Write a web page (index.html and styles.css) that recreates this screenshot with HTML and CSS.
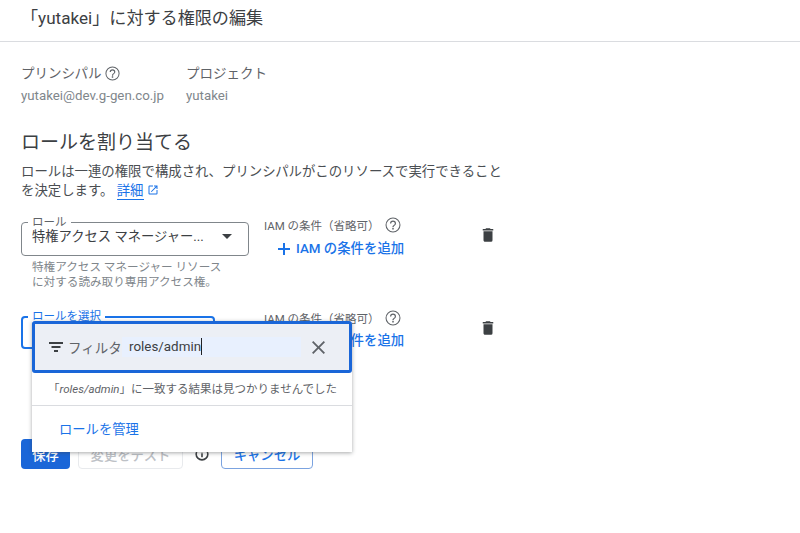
FILE: index.html
```html
<!DOCTYPE html>
<html lang="ja">
<head>
<meta charset="utf-8">
<title>権限の編集</title>
<link rel="stylesheet" href="styles.css">
</head>
<body>
<header class="top"><h1>「yutakei」に対する権限の編集</h1></header>
<main class="content">
  <section class="meta">
    <div class="meta-col">
      <div class="meta-label">プリンシパル <svg class="ico17" viewBox="0 0 24 24"><use href="#help"/></svg></div>
      <div class="meta-val">yutakei@dev.g-gen.co.jp</div>
    </div>
    <div class="meta-col">
      <div class="meta-label">プロジェクト</div>
      <div class="meta-val">yutakei</div>
    </div>
  </section>
  <h2>ロールを割り当てる</h2>
  <p class="desc">ロールは一連の権限で構成され、プリンシパルがこのリソースで実行できることを決定します。 <a class="more">詳細</a> <svg class="ext" viewBox="0 0 24 24"><path d="M19 19H5V5h7V3H5a2 2 0 0 0-2 2v14a2 2 0 0 0 2 2h14a2 2 0 0 0 2-2v-7h-2v7zM14 3v2h3.6l-9.8 9.8 1.4 1.4L19 6.4V10h2V3h-7z"/></svg></p>

  <div class="role-row first">
    <div class="role-col">
      <div class="field">
        <span class="legend">ロール</span>
        <span class="field-val">特権アクセス マネージャー...</span>
        <span class="caret"></span>
      </div>
      <div class="hint">特権アクセス マネージャー リソース<br>に対する読み取り専用アクセス権。</div>
    </div>
    <div class="cond">
      <div class="cond-label"><span class="cond-text">IAM の条件（省略可）</span><svg class="q" viewBox="0 0 24 24"><use href="#help"/></svg></div>
      <div class="cond-add"><svg class="plus" viewBox="0 0 14 14"><path d="M6 1h2v5h5v2H8v5H6V8H1V6h5z"/></svg>IAM の条件を追加</div>
    </div>
    <svg class="trash" viewBox="0 0 24 24"><use href="#trash"/></svg>
  </div>

  <div class="role-row second">
    <div class="role-col">
      <div class="field active">
        <span class="legend">ロールを選択</span>
      </div>
    </div>
    <div class="cond">
      <div class="cond-label"><span class="cond-text">IAM の条件（省略可）</span><svg class="q" viewBox="0 0 24 24"><use href="#help"/></svg></div>
      <div class="cond-add"><svg class="plus" viewBox="0 0 14 14"><path d="M6 1h2v5h5v2H8v5H6V8H1V6h5z"/></svg>IAM の条件を追加</div>
    </div>
    <svg class="trash" viewBox="0 0 24 24"><use href="#trash"/></svg>
  </div>

  <div class="actions">
    <button class="btn primary">保存</button>
    <button class="btn disabled">変更をテスト</button>
    <svg class="info" viewBox="0 0 24 24"><path d="M12 2a10 10 0 1 0 0 20 10 10 0 0 0 0-20zm0 17.6a7.6 7.6 0 1 1 0-15.2 7.6 7.6 0 0 1 0 15.2zM10.8 7h2.4v2.2h-2.4zm0 3.8h2.4V17h-2.4z"/></svg>
    <button class="btn outline">キャンセル</button>
  </div>
</main>

<div class="menu">
  <div class="filter">
    <svg class="filter-ico" viewBox="0 0 14 10"><path d="M0 0h14v2H0zM2.5 4h9v2h-9zM5 8h4v2H5z"/></svg>
    <span class="filter-label">フィルタ</span>
    <span class="filter-input">roles/admin<i class="cursor"></i></span>
    <svg class="close" viewBox="0 0 14 14"><path d="M1.4 0 7 5.6 12.6 0 14 1.4 8.4 7 14 12.6 12.6 14 7 8.4 1.4 14 0 12.6 5.6 7 0 1.4z"/></svg>
  </div>
  <div class="empty">「<em>roles/admin</em>」に一致する結果は見つかりませんでした</div>
  <div class="manage">ロールを管理</div>
</div>

<svg class="defs" width="0" height="0">
  <symbol id="help" viewBox="0 0 24 24"><path d="M11 18h2v-2h-2v2zm1-16a10 10 0 1 0 0 20 10 10 0 0 0 0-20zm0 18.6a8.6 8.6 0 1 1 0-17.2 8.6 8.6 0 0 1 0 17.2zM12 6a4 4 0 0 0-4 4h1.6a2.4 2.4 0 1 1 4.8 0c0 2.2-3.2 2-3.2 5h1.6c0-2.3 3.2-2.5 3.2-5a4 4 0 0 0-4-4z"/></symbol>
  <symbol id="trash" viewBox="0 0 24 24"><path d="M6 19c0 1.1.9 2 2 2h8a2 2 0 0 0 2-2V7H6v12zM19 4h-3.5l-1-1h-5l-1 1H5v2h14V4z"/></symbol>
</svg>
</body>
</html>
```
FILE: styles.css
```css
* { box-sizing: border-box; }
html, body { margin: 0; padding: 0; }
body {
  width: 800px;
  height: 533px;
  overflow: hidden;
  position: relative;
  background: #fff;
  color: #3c4043;
  font-family: Roboto, "Noto Sans CJK JP", sans-serif;
}
.defs { position: absolute; }
.top { height: 42px; border-bottom: 1px solid #dadce0; padding-left: 21px; }
h1 { margin: 0; padding-top: 5px; font-size: 17.1px; line-height: 26px; font-weight: 400; color: #3c4043; white-space: nowrap; }
.content { padding: 21px 0 0 21px; }
.meta { display: flex; gap: 22px; }
.meta-label { display: flex; align-items: center; gap: 2px; font-size: 13.5px; line-height: 20px; color: #5f6368; white-space: nowrap; }
.meta-val { font-size: 13.3px; line-height: 20px; margin-top: 3px; color: #80868b; }
.ico17 { width: 17px; height: 17px; fill: #5f6368; }
h2 { margin: 23px 0 0; font-size: 19px; line-height: 28px; font-weight: 400; color: #3c4043; white-space: nowrap; }
.desc { margin: 5px 0 0; width: 482px; font-size: 13.4px; line-height: 19px; color: #4a4e52; }
.more { color: #1a73e8; border-bottom: 1px solid #1a73e8; padding-bottom: 1px; }
.ext { width: 12px; height: 12px; fill: #1a73e8; vertical-align: -1px; }
.role-row { display: flex; position: relative; }
.role-row.first { margin-top: 22px; height: 94px; }
.role-row.second { height: 60px; }
.role-col { width: 243px; }
.field { position: relative; width: 228px; height: 34px; border: 1px solid #80868b; border-radius: 4px; }
.field.active { width: 194px; height: 33px; border: 2px solid #1a73e8; }
.legend { position: absolute; left: 6px; top: -8px; padding: 0 4px; background: #fff; font-size: 11.5px; line-height: 14px; color: #5f6368; white-space: nowrap; }
.active .legend { top: -9px; left: 5px; color: #1a73e8; }
.field-val { position: absolute; left: 10px; top: 5px; font-size: 13.3px; line-height: 18px; color: #3c4043; white-space: nowrap; }
.caret { position: absolute; right: 16px; top: 11px; border-left: 5px solid transparent; border-right: 5px solid transparent; border-top: 5px solid #3c4043; }
.hint { margin: 4px 0 0 11px; font-size: 11.6px; line-height: 15px; color: #80868b; }
.cond { width: 215px; margin-top: -5px; }
.second .cond { margin-top: -6px; }
.cond-label { display: flex; align-items: center; font-size: 11.5px; line-height: 16px; color: #5f6368; white-space: nowrap; }
.cond-text { width: 120px; }
.q { width: 18px; height: 18px; fill: #5f6368; margin-top: -1px; }
.cond-add { display: flex; align-items: center; margin: 6px 0 0 13px; font-size: 13.4px; line-height: 18px; font-weight: 500; color: #1a73e8; white-space: nowrap; }
.second .cond-add { margin-top: 5px; }
.plus { width: 14px; height: 14px; fill: #1a73e8; margin-right: 5px; }
.trash { width: 18px; height: 18px; fill: #3c4043; margin-top: 4px; }
.second .trash { margin-top: 3px; }
.actions { display: flex; align-items: center; margin-top: 63px; }
.btn { height: 30px; border-radius: 4px; font-family: inherit; font-size: 13.3px; font-weight: 500; padding: 0; }
.primary { width: 49px; background: #1a66d8; border: 0; color: #fff; }
.disabled { width: 105px; margin-left: 8px; background: #fff; border: 1px solid #e8eaed; color: #bdc1c6; }
.info { width: 16px; height: 16px; fill: #3c4043; margin-left: 11px; }
.outline { width: 92px; margin-left: 11px; background: #fff; border: 1px solid #7ba3e0; color: #1a73e8; }
.menu { position: absolute; left: 32px; top: 321px; width: 320px; height: 131px; background: #fff; box-shadow: 0 1px 4px rgba(60,64,67,.45); }
.filter { display: flex; align-items: center; height: 52px; background: #eceff5; border: 3px solid #1a66d8; border-radius: 3px; padding-left: 14px; }
.filter-ico { width: 14px; height: 10px; fill: #3c4043; }
.filter-label { margin-left: 5px; font-size: 13.5px; color: #5f6368; width: 54px; white-space: nowrap; }
.filter-input { width: 179px; height: 20px; padding-left: 7px; background: #e8f0fe; font-size: 13.4px; line-height: 20px; color: #3c4043; white-space: nowrap; }
.cursor { display: inline-block; width: 1px; height: 17px; background: #202124; vertical-align: -4px; }
.close { width: 13px; height: 13px; fill: #5f6368; margin-left: 11px; }
.empty { height: 33px; border-bottom: 1px solid #dadce0; padding-left: 16px; font-size: 11.5px; line-height: 33px; color: #5f6368; white-space: nowrap; }
.manage { padding: 15px 0 0 27px; font-size: 13.3px; line-height: 18px; color: #1a73e8; }
```
